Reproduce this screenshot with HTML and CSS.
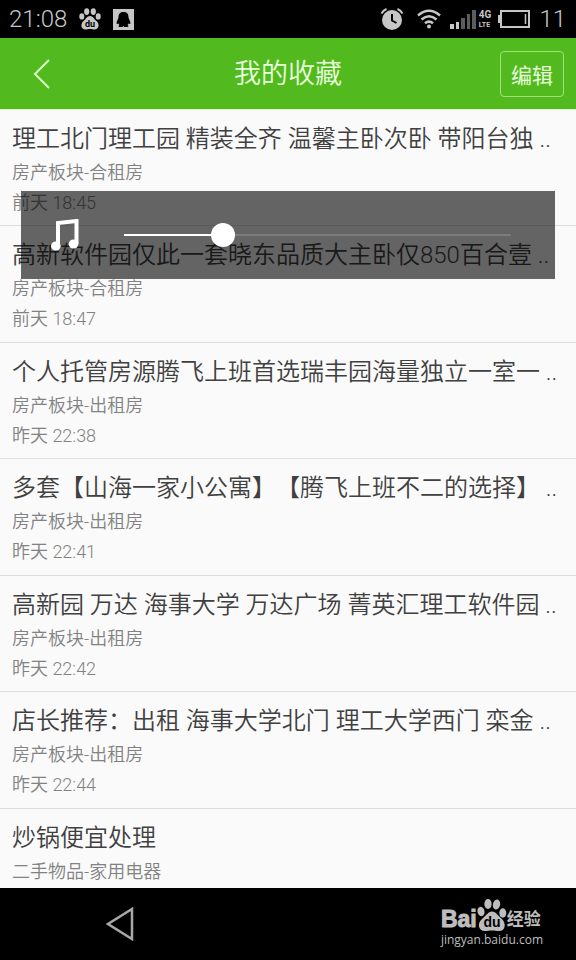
FILE: index.html
```html
<!DOCTYPE html>
<html lang="zh-CN">
<head>
<meta charset="utf-8">
<meta name="viewport" content="width=device-width, initial-scale=1">
<title>我的收藏</title>
<link rel="stylesheet" href="styles.css">
</head>
<body>
<div class="statusbar">
  <span class="clock">21:08</span>
  <svg class="paw" width="22" height="22" viewBox="0 0 22 22" aria-hidden="true">
    <g fill="#c6c6c6"><ellipse cx="7.7" cy="3.6" rx="2.6" ry="3.4"/><ellipse cx="14.3" cy="3.6" rx="2.6" ry="3.4"/><ellipse cx="2.8" cy="8.4" rx="2.5" ry="3.2"/><ellipse cx="19.2" cy="8.4" rx="2.5" ry="3.2"/><path d="M11 8C8 8 7 11 4.500 13C1.500 15.500 1.500 21 6 21.500C8 21.600 9 21 11 21C13 21 14 21.600 16 21.500C20.500 21 20.500 15.500 17.500 13C15 11 14 8 11 8Z"/></g>
    <text class="paw-text" x="11" y="19" text-anchor="middle">du</text>
  </svg>
  <svg width="21" height="21" viewBox="0 0 21 21" aria-hidden="true">
    <path fill="#c6c6c6" d="M0 0H21V21H0Z"/><path d="M10.500 3C7 3 5.500 5 5.500 8C5.500 10 3.800 11.500 3.600 14C3.600 15.500 4.300 15.300 5.200 14.200C5.500 15 6 15.500 6.500 16C5.500 16.400 5 17.800 6.500 18H9.500L10.500 17L11.500 18H14.500C16 17.800 15.500 16.400 14.500 16C15 15.500 15.500 15 15.800 14.200C16.700 15.300 17.400 15.500 17.400 14C17.200 11.500 15.500 10 15.500 8C15.500 5 14 3 10.500 3Z"/>
  </svg>
  <div class="system">
    <svg width="24" height="24" viewBox="0 0 24 24" aria-hidden="true">
      <circle cx="12" cy="13" r="10" fill="#c6c6c6"/><path d="M1.500 6.500Q3 3.500 6.500 2M22.500 6.500Q21 3.500 17.500 2" fill="none" stroke="#c6c6c6" stroke-width="2"/><path d="M12 7V13.500L16.500 16" fill="none" stroke="#000" stroke-width="2"/>
    </svg>
    <svg class="wifi" width="24" height="20" viewBox="0 0 24 20" fill="none" stroke="#c6c6c6" stroke-width="2.500" aria-hidden="true">
      <path d="M1 6.500Q12-3 23 6.500M4.500 10.500Q12 4 19.500 10.500M8 14.300Q12 11 16 14.300"/><circle cx="12" cy="17.500" r="2" fill="#c6c6c6" stroke="none"/>
    </svg>
    <svg class="signal" width="26" height="19" viewBox="0 0 26 19" aria-hidden="true">
      <path fill="#c6c6c6" d="M0 14H4V19H0ZM6 12H9V19H6Z"/><path fill="#5c5c5c" d="M11 8H15V19H11ZM17 4H20V19H17ZM22 0H26V19H22Z"/>
    </svg>
    <span class="network"><span>4G</span><span class="lte">LTE</span></span>
    <svg class="battery" width="32" height="18" viewBox="0 0 32 18" aria-hidden="true">
      <path d="M3 1H31V17H3Z" fill="none" stroke="#c6c6c6" stroke-width="2"/><path d="M0 5H3V13H0Z" fill="#c6c6c6"/><path d="M27.500 4V14" stroke="#c6c6c6" stroke-width="1.500"/>
    </svg>
    <span class="level">11</span>
  </div>
</div>

<header class="header">
  <button class="back" type="button" aria-label="返回">
    <svg width="18" height="30" viewBox="0 0 18 30" fill="none" stroke="#dcffc8" stroke-width="2" aria-hidden="true"><path d="M16 1L2 15L16 29"/></svg>
  </button>
  <h1>我的收藏</h1>
  <button class="edit" type="button">编辑</button>
</header>

<main class="content">
  <ul class="list">
    <li><h2>理工北门理工园 精装全齐 温馨主卧次卧 带阳台独 ..</h2><p>房产板块-合租房</p><p>前天 18:45</p></li>
    <li><h2>高新软件园仅此一套晓东品质大主卧仅850百合壹 ..</h2><p>房产板块-合租房</p><p>前天 18:47</p></li>
    <li><h2>个人托管房源腾飞上班首选瑞丰园海量独立一室一 ..</h2><p>房产板块-出租房</p><p>昨天 22:38</p></li>
    <li><h2>多套【山海一家小公寓】【腾飞上班不二的选择】 ..</h2><p>房产板块-出租房</p><p>昨天 22:41</p></li>
    <li><h2>高新园 万达 海事大学 万达广场 菁英汇理工软件园 ..</h2><p>房产板块-出租房</p><p>昨天 22:42</p></li>
    <li><h2>店长推荐：出租 海事大学北门 理工大学西门 栾金 ..</h2><p>房产板块-出租房</p><p>昨天 22:44</p></li>
    <li><h2>炒锅便宜处理</h2><p>二手物品-家用电器</p></li>
  </ul>
  <div class="volume">
    <svg width="28" height="32" viewBox="0 0 28 32" aria-hidden="true">
      <path d="M7 27V4L25.500 2V25" fill="none" stroke="#fff" stroke-width="4"/><ellipse cx="4.800" cy="27" rx="4.800" ry="4.600" fill="#fff"/><ellipse cx="22.500" cy="25" rx="4.800" ry="4.600" fill="#fff"/>
    </svg>
    <input type="range" min="0" max="100" value="24" aria-label="媒体音量">
  </div>
</main>

<footer class="navbar">
  <button class="nav-back" type="button" aria-label="后退">
    <svg width="28" height="34" viewBox="0 0 28 34" fill="none" stroke="#a8a8a8" stroke-width="2.500" aria-hidden="true"><path d="M26 2V32L2 17Z"/></svg>
  </button>
  <div class="brand">
    <div class="brand-top">
      <span class="bai">Bai</span>
      <svg width="30" height="32" viewBox="0 0 30 32" aria-hidden="true">
        <g fill="#bdbdbd"><ellipse cx="11" cy="5" rx="3.600" ry="5"/><ellipse cx="19.500" cy="5.500" rx="3.600" ry="5" transform="rotate(12 19.500 5.500)"/><ellipse cx="4" cy="12.500" rx="3.500" ry="4.700" transform="rotate(-12 4 12.500)"/><ellipse cx="25.800" cy="14" rx="3.500" ry="4.700"/><path d="M15 12.500C11 12.500 9 17 5 20C0 24 1 32 8 32C11 32 12 31.500 15 31.500C18 31.500 19 32 22 32C29 32 29 24 25 20C21 17 19 12.500 15 12.500Z"/></g>
        <text class="brand-du" x="15" y="28" text-anchor="middle">du</text>
      </svg>
      <span class="jingyan">经验</span>
    </div>
    <div class="domain">jingyan.baidu.com</div>
  </div>
</footer>
</body>
</html>
```

FILE: styles.css
```css
* {
  box-sizing: border-box;
}

body {
  margin: 0;
  height: 100vh;
  display: flex;
  flex-direction: column;
  overflow: hidden;
  background: #fafafa;
  font-family: Roboto, "Noto Sans CJK SC", sans-serif;
  font-weight: 300;
  text-spacing-trim: space-all;
}

h1,
h2,
p,
ul {
  margin: 0;
  padding: 0;
  font-weight: inherit;
}

button {
  padding: 0;
  border: 0;
  background: none;
  font: inherit;
}

svg {
  display: block;
  flex: none;
}

.statusbar {
  flex: none;
  display: flex;
  align-items: center;
  height: 38px;
  padding: 0 10px 0 9px;
  background: #000;
  color: #c6c6c6;
  font-size: 24px;
}

.paw {
  margin: 0 12px;
}

.paw-text {
  font: 700 9px Roboto, sans-serif;
}

.system {
  display: flex;
  align-items: center;
  margin-left: auto;
}

.wifi {
  margin-left: 13px;
}

.signal {
  margin-left: 9px;
}

.network {
  display: flex;
  flex-direction: column;
  margin: 0 7px 0 3px;
  font: 700 10px/12px Roboto, sans-serif;
}

.lte {
  font-size: 7px;
  line-height: 9px;
}

.battery {
  margin-right: 9px;
}

.header {
  flex: none;
  display: grid;
  grid-template-columns: 64px 1fr 64px;
  align-items: center;
  height: 72px;
  padding: 0 12px;
  background: #52ba1e;
  border-bottom: 1px solid #dcf8ca;
  color: #e8ffdc;
}

.back {
  display: flex;
  align-items: center;
  height: 48px;
  padding-left: 21px;
}

.header h1 {
  text-align: center;
  font-size: 27px;
  font-weight: 350;
  line-height: 40px;
}

.edit {
  height: 46px;
  border: 1px solid #a0e478;
  border-radius: 4px;
  color: inherit;
  font-size: 21px;
  font-weight: 400;
}

.content {
  position: relative;
  flex: 1;
  min-height: 0;
  overflow: hidden;
}

.list {
  list-style: none;
}

.list li {
  height: 116px;
  padding: 10px 12px 0;
  border-bottom: 1px solid #dedede;
}

.list li:nth-child(even) {
  height: 117px;
}

.list h2 {
  overflow: hidden;
  white-space: nowrap;
  color: #404040;
  font-size: 24px;
  font-weight: 350;
  line-height: 38px;
}

.list p {
  color: #828282;
  font-size: 18px;
  font-weight: 350;
  line-height: 30px;
}

.volume {
  position: absolute;
  top: 81px;
  left: 21px;
  right: 21px;
  display: flex;
  align-items: center;
  gap: 45px;
  height: 88px;
  padding: 0 44px 0 30px;
  background: rgba(0, 0, 0, 0.6);
}

.volume input {
  flex: 1;
  min-width: 0;
  height: 24px;
  margin: 0;
  appearance: none;
  background: linear-gradient(#fff, #fff) left center / 25% 2px no-repeat,
    linear-gradient(#7c7c7c, #7c7c7c) center / 100% 2px no-repeat;
}

.volume input::-webkit-slider-thumb {
  appearance: none;
  width: 24px;
  height: 24px;
  border-radius: 50%;
  background: #fff;
}

.navbar {
  flex: none;
  display: flex;
  align-items: center;
  justify-content: space-between;
  height: 72px;
  padding: 0 33px 0 106px;
  background: #000;
  color: #bdbdbd;
}

.brand-top {
  display: flex;
  align-items: flex-end;
  height: 32px;
}

.bai {
  font: 700 23px/24px "Liberation Sans", sans-serif;
  -webkit-text-stroke: 1px #bdbdbd;
}

.brand-du {
  font: 700 14px "Liberation Sans", sans-serif;
}

.jingyan {
  font-size: 17px;
  font-weight: 700;
  line-height: 24px;
}

.domain {
  font: 400 12px/18px "Open Sans", sans-serif;
}
```
